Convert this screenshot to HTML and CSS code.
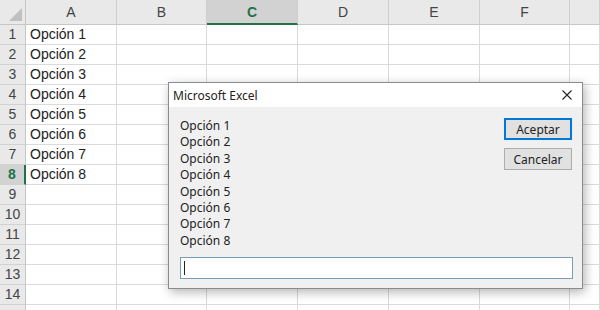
FILE: index.html
```html
<!DOCTYPE html>
<html lang="es">
<head>
<meta charset="UTF-8" />
<title>Excel - InputBox</title>
<link rel="stylesheet" href="styles.css">
</head>
<body>
  <div class="hoja">
    <div class="rejilla" id="rejilla"></div>

    <div class="dialogo">
      <div class="dialogo-titulo">
        <span>Microsoft Excel</span>
        <svg class="cerrar" width="10" height="10" viewBox="0 0 10 10">
          <path d="M0.5 0.5 L9.5 9.5 M9.5 0.5 L0.5 9.5" stroke="#222" stroke-width="1.1" fill="none"/>
        </svg>
      </div>
      <div class="dialogo-cuerpo">
        <div class="dialogo-fila">
          <div class="mensaje">
            <div>Opción 1</div>
            <div>Opción 2</div>
            <div>Opción 3</div>
            <div>Opción 4</div>
            <div>Opción 5</div>
            <div>Opción 6</div>
            <div>Opción 7</div>
            <div>Opción 8</div>
          </div>
          <div class="botones">
            <button class="btn btn-defecto">Aceptar</button>
            <button class="btn">Cancelar</button>
          </div>
        </div>
        <div class="entrada"><span class="cursor"></span></div>
      </div>
    </div>
  </div>

<script>
  // Construir la hoja de cálculo
  const rejilla = document.getElementById('rejilla');
  const columnas = ['A', 'B', 'C', 'D', 'E', 'F', ''];

  function celda(clase, texto) {
    const d = document.createElement('div');
    d.className = clase;
    d.textContent = texto || '';
    rejilla.appendChild(d);
  }

  // Cabecera
  celda('esquina');
  columnas.forEach(c => {
    celda(c === 'C' ? 'cab-col activa' : 'cab-col', c);
  });

  // Filas (la 15 queda cortada por el borde, sin número visible)
  for (let f = 1; f <= 15; f++) {
    celda(f === 8 ? 'cab-fila activa' : 'cab-fila', f < 15 ? f : '');
    columnas.forEach((c, i) => {
      const texto = (i === 0 && f <= 8) ? 'Opción ' + f : '';
      celda('celda', texto);
    });
  }
</script>
</body>
</html>
```

FILE: styles.css
```css
:root {
  --verde: #217346;
  --linea: #dadada;
  --cabecera: #e9e9e9;
  --fuente-hoja: 'Liberation Sans', Arial, sans-serif;
  --fuente-ui: 'Noto Sans', 'Open Sans', sans-serif;
}
body {
  margin: 0;
  width: 600px;
  height: 310px;
  overflow: hidden;
  background: white;
}
.hoja {
  position: relative;
  width: 600px;
  height: 310px;
}
.rejilla {
  display: grid;
  grid-template-columns: 26px 91px 90px 91px 91px 91px 90px 1fr;
  grid-template-rows: 25px repeat(15, 20px);
  font-family: var(--fuente-hoja);
  font-size: 14px;
  color: #222;
}
.esquina {
  position: relative;
  background: var(--cabecera);
  border-right: 1px solid #c6c6c6;
  border-bottom: 1px solid #c6c6c6;
}
.esquina::after {
  content: '';
  position: absolute;
  right: 3px;
  bottom: 3px;
  border-left: 13px solid transparent;
  border-bottom: 13px solid #c0c0c0;
}
.cab-col {
  background: var(--cabecera);
  border-right: 1px solid #cfcfcf;
  border-bottom: 1px solid #c6c6c6;
  text-align: center;
  line-height: 25px;
  color: #444;
}
.cab-col.activa {
  background: #d2d2d2;
  border-bottom: 2px solid var(--verde);
  color: var(--verde);
  font-weight: bold;
  line-height: 24px;
}
.cab-fila {
  background: var(--cabecera);
  border-right: 1px solid #c6c6c6;
  border-bottom: 1px solid #d2d2d2;
  text-align: center;
  line-height: 19px;
  color: #444;
}
.cab-fila.activa {
  background: #d2d2d2;
  border-right: 2px solid var(--verde);
  color: var(--verde);
  font-weight: bold;
}
.celda {
  border-right: 1px solid var(--linea);
  border-bottom: 1px solid var(--linea);
  padding-left: 4px;
  line-height: 19px;
  white-space: nowrap;
}

/* Ventana InputBox */
.dialogo {
  position: absolute;
  left: 168px;
  top: 82px;
  width: 413px;
  height: 205px;
  border: 1px solid #8c8c8c;
  background: #f0f0f0;
  box-shadow: 2px 3px 10px rgba(0,0,0,0.3);
  font-family: var(--fuente-ui);
  font-size: 12px;
  color: #222;
  display: flex;
  flex-direction: column;
}
.dialogo-titulo {
  height: 24px;
  background: white;
  display: flex;
  align-items: center;
  justify-content: space-between;
  padding: 0 10px 0 4px;
}
.dialogo-cuerpo {
  flex: 1;
  padding: 11px 10px 0 11px;
}
.dialogo-fila {
  display: flex;
  justify-content: space-between;
}
.mensaje div {
  line-height: 16.4px;
}
.botones {
  display: flex;
  flex-direction: column;
  gap: 8px;
}
.btn {
  width: 68px;
  height: 22px;
  margin: 0;
  padding: 0;
  background: #e1e1e1;
  border: 1px solid #adadad;
  font-family: var(--fuente-ui);
  font-size: 12px;
  color: #222;
}
.btn-defecto {
  border: 2px solid #0078d7;
}
.entrada {
  box-sizing: border-box;
  margin-top: 8px;
  width: 393px;
  height: 22px;
  background: white;
  border: 1px solid #7a9cb5;
  display: flex;
  align-items: center;
  padding-left: 3px;
}
.cursor {
  width: 1px;
  height: 14px;
  background: #222;
}
```
